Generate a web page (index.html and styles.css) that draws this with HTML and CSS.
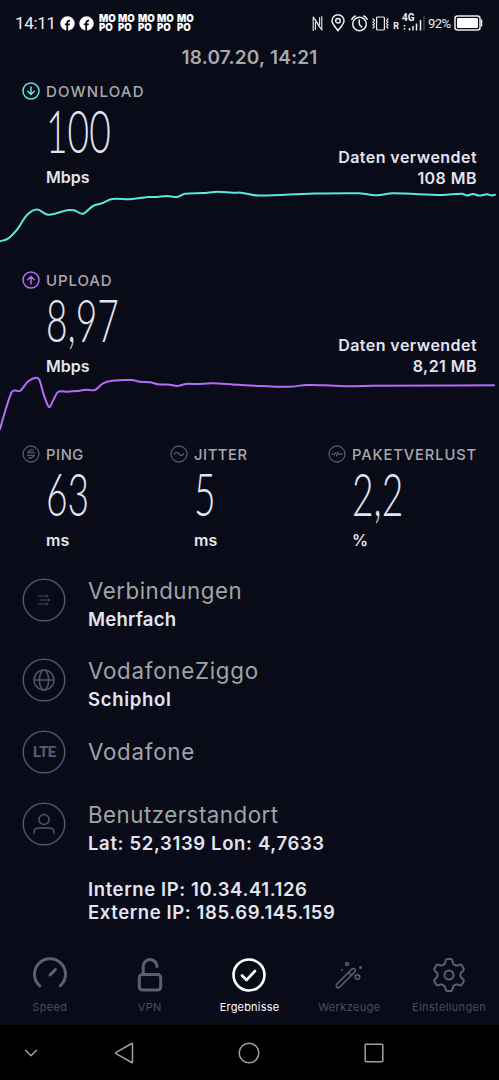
FILE: index.html
```html
<!DOCTYPE html>
<html lang="de">
<head>
  <meta charset="UTF-8" />
  <meta name="viewport" content="width=device-width, initial-scale=1.0"/>
  <title>Ergebnisse</title>
  <link rel="stylesheet" href="styles.css">
</head>
<body>

  <div class="status-bar">
    <div class="status-left">
      <span class="clock">14:11</span>
      <svg class="fb" viewBox="0 0 15 15"><circle cx="7.5" cy="7.5" r="7.2"/><path d="M7.2 15V7.2q0-2.7 2.9-2.5M4.8 8.3h5"/></svg>
      <svg class="fb" viewBox="0 0 15 15"><circle cx="7.5" cy="7.5" r="7.2"/><path d="M7.2 15V7.2q0-2.7 2.9-2.5M4.8 8.3h5"/></svg>
      <span class="mopo">MO<br>PO</span>
      <span class="mopo">MO<br>PO</span>
      <span class="mopo">MO<br>PO</span>
      <span class="mopo">MO<br>PO</span>
      <span class="mopo">MO<br>PO</span>
    </div>
    <div class="status-right">
      <svg class="nfc" width="11" height="17" viewBox="0 0 11 17"><path d="M1.200 15.500V2l6.600 10.500M3.200 4.500l6.600 10.500V1.500M7.600 2.500v7M3.400 7.500v7" /></svg>
      <svg class="pin" width="14" height="18" viewBox="0 0 14 18"><path d="M7 16.700C4 12.500 1 10 1 6.800a6 6 0 0 1 12 0c0 3.200-3 5.700-6 9.900z"/><circle cx="7" cy="6.700" r="2.300"/></svg>
      <svg class="alarm" width="17" height="17" viewBox="0 0 17 17"><circle cx="8.500" cy="9" r="6.800"/><path d="M8.300 5v4.500l2.500 2.500M.8 4.300Q2 2 4.300 1M12.700 1Q15 2 16.200 4.300"/></svg>
      <svg class="vibrate" width="17" height="15" viewBox="0 0 17 15"><rect x="4.600" y="1" width="7.800" height="13" rx="1"/><path d="M1 3l1.500 1.500L1 6l1.500 1.500L1 9l1.500 1.500L1 12M16 3l-1.500 1.500L16 6l-1.500 1.500L16 9l-1.500 1.500L16 12"/></svg>
      <span class="roaming">R</span>
      <div class="signal">
        <span>4G</span>
        <svg width="23" height="16" viewBox="0 0 23 16"><path d="M2.500 10v1.500M2.500 13v1.500M7.500 13v2.500M11 11v4.500M14.500 8.500v7M18.500 5v10.500"/><path class="dim" d="M22 1v14.500"/></svg>
      </div>
      <span class="percent">92%</span>
      <svg class="battery" width="29" height="16" viewBox="0 0 29 16"><rect x="1" y="1" width="25" height="14" rx="2.500"/><rect class="fill" x="3" y="3" width="21" height="10" rx="1"/><path d="M27.500 5v6"/></svg>
    </div>
  </div>

  <h1 class="date">18.07.20, 14:21</h1>

  <section class="result download">
    <div class="label">
      <svg viewBox="0 0 18 18"><circle cx="9" cy="9" r="8"/><path d="M9 5v7.500M5.700 9.200L9 12.500l3.300-3.300"/></svg>
      <span>DOWNLOAD</span>
    </div>
    <div class="numbers">
      <div>
        <div class="value">100</div>
        <div class="unit">Mbps</div>
      </div>
      <div class="data-used"><div>Daten verwendet</div><div>108 MB</div></div>
    </div>
    <svg class="chart" viewBox="0 0 499 60"><path id="downloadLine"/></svg>
  </section>

  <section class="result upload">
    <div class="label">
      <svg viewBox="0 0 18 18"><circle cx="9" cy="9" r="8"/><path d="M9 13V5.500M5.700 8.800L9 5.500l3.300 3.300"/></svg>
      <span>UPLOAD</span>
    </div>
    <div class="numbers">
      <div>
        <div class="value">8,97</div>
        <div class="unit">Mbps</div>
      </div>
      <div class="data-used"><div>Daten verwendet</div><div>8,21 MB</div></div>
    </div>
    <svg class="chart" viewBox="0 0 499 60"><path id="uploadLine"/></svg>
  </section>

  <section class="metrics">
    <div class="metric">
      <div class="label ping">
        <svg viewBox="0 0 18 18"><circle cx="9" cy="9" r="8"/><path d="M12.500 7.700h-7L8.800 4.800M11.500 5.200H8.800M5.500 10.300h7L9.200 13.200M6.500 12.800h2.700"/></svg>
        <span>PING</span>
      </div>
      <div class="value">63</div>
      <div class="unit">ms</div>
    </div>
    <div class="metric">
      <div class="label jitter">
        <svg viewBox="0 0 18 18"><circle cx="9" cy="9" r="8"/><path d="M4.300 9.500C5.500 6.500 7.500 7 9 9s3.500 2.500 4.700-.5"/></svg>
        <span>JITTER</span>
      </div>
      <div class="value">5</div>
      <div class="unit">ms</div>
    </div>
    <div class="metric">
      <div class="label loss">
        <svg viewBox="0 0 18 18"><circle cx="9" cy="9" r="8"/><path d="M4 9.300h2.500l1.200-1.600M8.500 11L9.800 7M10.200 9h1.500M12.500 9H14"/></svg>
        <span>PAKETVERLUST</span>
      </div>
      <div class="value">2,2</div>
      <div class="unit">%</div>
    </div>
  </section>

  <section class="details">
    <div class="detail">
      <svg viewBox="0 0 44 44"><circle cx="22" cy="22" r="20.800"/><path class="thin" d="M16.500 18h9M18 22h9.500M16.500 26h9M24.800 17l1.300 1-1.300 1M26.300 21l1.300 1-1.300 1M24.800 25l1.300 1-1.300 1"/></svg>
      <div><div class="name">Verbindungen</div><div class="info">Mehrfach</div></div>
    </div>
    <div class="detail">
      <svg viewBox="0 0 44 44"><circle cx="22" cy="22" r="20.800"/><circle cx="22" cy="22" r="10"/><ellipse cx="22" cy="22" rx="4.600" ry="10"/><path d="M12 22h20"/></svg>
      <div><div class="name wide">VodafoneZiggo</div><div class="info wide">Schiphol</div></div>
    </div>
    <div class="detail single">
      <svg viewBox="0 0 44 44"><circle cx="22" cy="22" r="20.800"/><text x="22.400" y="27.400">LTE</text></svg>
      <div><div class="name wide">Vodafone</div></div>
    </div>
    <div class="detail">
      <svg viewBox="0 0 44 44"><circle cx="22" cy="22" r="20.800"/><circle cx="22" cy="17.500" r="5"/><path d="M12 31.500v-1q0-4.500 5-4.500h10q5 0 5 4.500v1"/></svg>
      <div>
        <div class="name">Benutzerstandort</div>
        <div class="info location">Lat: 52,3139 Lon: 4,7633</div>
        <div class="ips">Interne IP: 10.34.41.126<br>Externe IP: 185.69.145.159</div>
      </div>
    </div>
  </section>

  <nav class="tabs">
    <a class="tab heavy">
      <svg viewBox="0 0 36 36"><path d="M7.800 28.800A15.500 15.500 0 1 1 28.200 28.800M18 18l5.500-5.500"/></svg>
      <span>Speed</span>
    </a>
    <a class="tab heavy">
      <svg viewBox="0 0 36 36"><rect x="7.300" y="17.500" width="21.400" height="15.500" rx="3"/><path d="M11.200 17V9.500a6.900 6.900 0 0 1 13.800 0"/></svg>
      <span>VPN</span>
    </a>
    <a class="tab active">
      <svg viewBox="0 0 36 36"><circle cx="18" cy="18" r="15.500"/><path d="M11 18.500l4.500 4.500 8.500-9"/></svg>
      <span>Ergebnisse</span>
    </a>
    <a class="tab">
      <svg viewBox="0 0 36 36"><path d="M5.700 27.200L20.800 12.100a2 2 0 0 1 2.900 2.900L8.600 30.100a2 2 0 0 1-2.900-2.900zM17.500 15.500l3 3"/><circle cx="16" cy="7" r="1.400"/><circle cx="26.500" cy="20" r="2.300"/><circle class="dot" cx="29.500" cy="10.500" r="1.500"/><circle class="dot" cx="11" cy="13" r="1"/></svg>
      <span>Werkzeuge</span>
    </a>
    <a class="tab gear">
      <svg viewBox="0 0 36 36"><circle cx="18" cy="18" r="4.500"/><path d="M14.700 3.500Q15 2 16.300 2h3.400q1.300 0 1.600 1.500l.7 2.600q.3 1 1.300 1.600l.8.500q1 .6 2 .3l2.600-.8q1.500-.4 2.200.8l1.700 3q.6 1.200-.4 2.200l-2 1.800q-.7.700-.7 1.700v1.600q0 1 .7 1.700l2 1.800q1 1 .4 2.200l-1.700 3q-.7 1.200-2.200.8l-2.600-.8q-1-.3-2 .3l-.8.500q-1 .6-1.300 1.600l-.7 2.600Q21 34 19.700 34h-3.400q-1.300 0-1.600-1.500l-.7-2.600q-.3-1-1.300-1.600l-.8-.5q-1-.6-2-.3l-2.600.8q-1.500.4-2.200-.8l-1.700-3q-.6-1.200.4-2.200l2-1.800q.7-.7.700-1.700v-1.600q0-1-.7-1.700l-2-1.800q-1-1-.4-2.200l1.700-3q.7-1.200 2.200-.8l2.600.8q1 .3 2-.3l.8-.5q1-.6 1.300-1.600z"/></svg>
      <span>Einstellungen</span>
    </a>
  </nav>

  <div class="system-bar">
    <svg width="14" height="8" viewBox="0 0 14 8"><path d="M1.500 1.200L7 6.800l5.500-5.600"/></svg>
    <svg width="20" height="22" viewBox="0 0 20 22"><path d="M17.800 1.500Q18.500 1 18.500 2v18q0 1-.8.500L2 11.600q-.8-.6 0-1.200z"/></svg>
    <svg width="22" height="22" viewBox="0 0 22 22"><circle cx="11" cy="11" r="9.800"/></svg>
    <svg width="20" height="20" viewBox="0 0 20 20"><rect x="1.200" y="1.200" width="17.600" height="17.600" rx="1"/></svg>
  </div>

  <script>
    const download = [[0,53.3],[8,50.7],[17,41.7],[27,27],[37,21.5],[47,26.5],[55,25.7],[67,22.3],[74,22.3],[83,25.7],[93,18],[102,15.3],[112,11],[130,11.3],[148,9],[157,9],[167,8],[177,9],[185,5.7],[203,5],[218,3.7],[233,4.7],[241,4.7],[258,7.5],[310,5.7],[358,5.3],[377,7.3],[393,5.3],[442,7],[462,5.7],[467,7.6],[473,5.9],[479,7.6],[487,6.3],[492,7.4],[495,6.7]];
    const upload = [[0,52.3],[5,34.7],[11.5,15.5],[15,13.5],[20,14],[28,4.5],[36,0.7],[39.5,3],[43.3,16.3],[49,30],[53,23.5],[58,15],[67,14.7],[77,14],[86,12.7],[95,13],[103,6.3],[112,3.7],[132,3],[140,4.8],[150,5.3],[158,7.2],[170,7.7],[177,9],[186,7],[197,7],[213,6.3],[233,7.5],[250,8.5],[288,9.8],[307,8],[325,8.3],[350,9.3],[373,8.7],[494,8.3]];

    // smooth line: each segment eases between its two neighbours
    function drawLine(id, points) {
      let d = `M${points[0]}`;
      for (let i = 0; i < points.length - 1; i++) {
        const p0 = points[i - 1] || points[i];
        const p1 = points[i];
        const p2 = points[i + 1];
        const p3 = points[i + 2] || p2;
        const dx = (p2[0] - p1[0]) / 3;
        const s1 = (p2[1] - p0[1]) / (p2[0] - p0[0]);
        const s2 = (p3[1] - p1[1]) / (p3[0] - p1[0]);
        d += `C${p1[0] + dx},${p1[1] + s1 * dx} ${p2[0] - dx},${p2[1] - s2 * dx} ${p2}`;
      }
      document.getElementById(id).setAttribute("d", d);
    }

    drawLine("downloadLine", download);
    drawLine("uploadLine", upload);
  </script>

</body>
</html>
```
FILE: styles.css
```css
:root {
  --bg: #090b19;
  --text: #e4e4ef;
  --label: #a9a9ac;
  --muted: #55566a;
  --download: #5ce8df;
  --upload: #b46df2;
}

* { box-sizing: border-box; }

body {
  margin: 0;
  height: 1080px;
  overflow: hidden;
  background: var(--bg);
  color: var(--text);
  font-family: Inter, "Noto Sans", sans-serif;
  display: flex;
  flex-direction: column;
}

svg {
  display: block;
  flex: none;
  fill: none;
  stroke: currentColor;
  stroke-width: 1.5;
  stroke-linecap: round;
  stroke-linejoin: round;
}

/* status bar */
.status-bar {
  height: 44px;
  padding: 2px 16px 0 15px;
  display: flex;
  justify-content: space-between;
  align-items: center;
  color: #eee;
  font-family: Roboto, sans-serif;
}

.status-left, .status-right {
  display: flex;
  align-items: center;
}

.clock {
  font-size: 17px;
  width: 45px;
  letter-spacing: -0.3px;
}

.fb {
  width: 15px;
  height: 15px;
  margin-right: 4.3px;
}

.fb circle {
  fill: #fff;
  stroke: none;
}

.fb path {
  stroke: var(--bg);
  stroke-width: 1.8;
  stroke-linecap: butt;
}

.mopo {
  width: 19.5px;
  color: #fff;
  font: 900 10.5px/9px Inter, sans-serif;
  transform: scaleX(0.92);
  transform-origin: left;
}

.nfc { margin-right: 8px; stroke-width: 1.1; }
.pin { margin-right: 6px; }
.alarm { margin-right: 4px; }
.vibrate { margin-right: 4px; stroke-width: 1.2; }

.roaming {
  font-size: 9px;
  font-weight: 700;
  margin: 6px 3px 0 0;
}

.signal {
  position: relative;
  margin-right: 3px;
}

.signal span {
  position: absolute;
  left: 0;
  top: -2px;
  font-size: 10px;
  line-height: 10px;
  font-weight: 700;
}

.signal svg { stroke-linecap: butt; }
.signal .dim { stroke: #444653; }

.percent {
  font-size: 13px;
  width: 26px;
  letter-spacing: -0.5px;
}

.battery .fill {
  fill: #fff;
  stroke: none;
}

.date {
  margin: 0;
  height: 31px;
  line-height: 27px;
  text-align: center;
  font-size: 19px;
  font-weight: 600;
  letter-spacing: 0.2px;
  color: var(--label);
}

/* results */
.result { height: 189px; }

.label {
  height: 32px;
  padding-left: 22px;
  display: flex;
  align-items: center;
  gap: 6px;
  font-size: 14.7px;
  font-weight: 500;
  letter-spacing: 0.6px;
  color: var(--label);
}

.label svg {
  width: 18px;
  height: 18px;
}

.label span { padding-top: 1px; }

.result .label {
  font-size: 15px;
  letter-spacing: 1.2px;
}

.upload .label { letter-spacing: 0.9px; }
.loss { letter-spacing: 0.9px; }

.download svg { color: var(--download); }
.upload svg { color: var(--upload); }

.numbers {
  height: 81px;
  padding: 0 22px 0 46px;
  display: flex;
  justify-content: space-between;
  align-items: flex-end;
}

.value {
  height: 60px;
  font-family: Lato, sans-serif;
  font-size: 60px;
  line-height: 46px;
  font-weight: 300;
  transform: scaleX(0.62);
  transform-origin: left;
}

.unit {
  height: 21px;
  font-size: 16px;
  line-height: 21px;
  font-weight: 600;
}

.data-used {
  text-align: right;
  font-size: 16px;
  line-height: 20.5px;
  font-weight: 600;
  letter-spacing: 0.45px;
}

.upload .data-used { padding-bottom: 1px; }

.chart {
  width: 499px;
  height: 60px;
  overflow: visible;
  stroke-width: 2;
}

.metrics {
  margin-top: -15px;
  height: 139px;
  display: grid;
  grid-template-columns: 148px 158px 1fr;
}

.metrics .label svg { color: var(--muted); stroke-width: 1.3; }
.metrics .value, .metrics .unit { margin-left: 46px; }

/* connection details */
.details {
  height: 363px;
  padding: 0 22px;
}

.detail {
  height: 80px;
  display: flex;
  gap: 22px;
}

.detail > svg {
  width: 44px;
  height: 44px;
  margin-top: 1px;
  color: #51536a;
}

.detail .thin { stroke-width: 0.9; }

.detail text {
  fill: #5b5c70;
  stroke: none;
  font-family: Roboto, sans-serif;
  font-size: 15px;
  font-weight: 700;
  text-anchor: middle;
  letter-spacing: -0.5px;
}

.name {
  font-size: 22.3px;
  line-height: 28px;
  font-weight: 400;
  letter-spacing: 0.5px;
  color: #a3a3a4;
}

.name.wide { letter-spacing: 0.75px; }

.info, .ips {
  font-size: 18.5px;
  line-height: 29px;
  font-weight: 600;
  letter-spacing: 0.2px;
}

.info.wide { letter-spacing: 0.7px; }
.location { letter-spacing: 0.65px; }

.single { margin-top: -8px; height: 72px; }
.single .name { line-height: 46px; }

.ips {
  margin-top: 20px;
  line-height: 23px;
  letter-spacing: 0.6px;
}

/* bottom tabs */
.tabs {
  height: 85px;
  display: grid;
  grid-template-columns: repeat(5, 1fr);
}

.tab {
  display: flex;
  flex-direction: column;
  align-items: center;
  padding-top: 17px;
  gap: 6px;
  font-size: 11px;
  line-height: 16px;
  letter-spacing: 0.35px;
  color: #4b4c60;
}

.tab svg {
  width: 36px;
  height: 36px;
  color: #5d5e74;
}

.heavy svg { stroke-width: 3; }
.gear svg { stroke-width: 2; }
.tab .dot { fill: currentColor; stroke: none; }

.active, .active svg { color: #fff; }
.active { letter-spacing: 0.2px; }
.active svg { stroke-width: 2.6; }

.system-bar {
  height: 55px;
  background: #000;
  color: #a0a0a0;
  display: grid;
  grid-template-columns: 62px 124px 126px 124px 63px;
  align-items: center;
  justify-items: center;
}
```
